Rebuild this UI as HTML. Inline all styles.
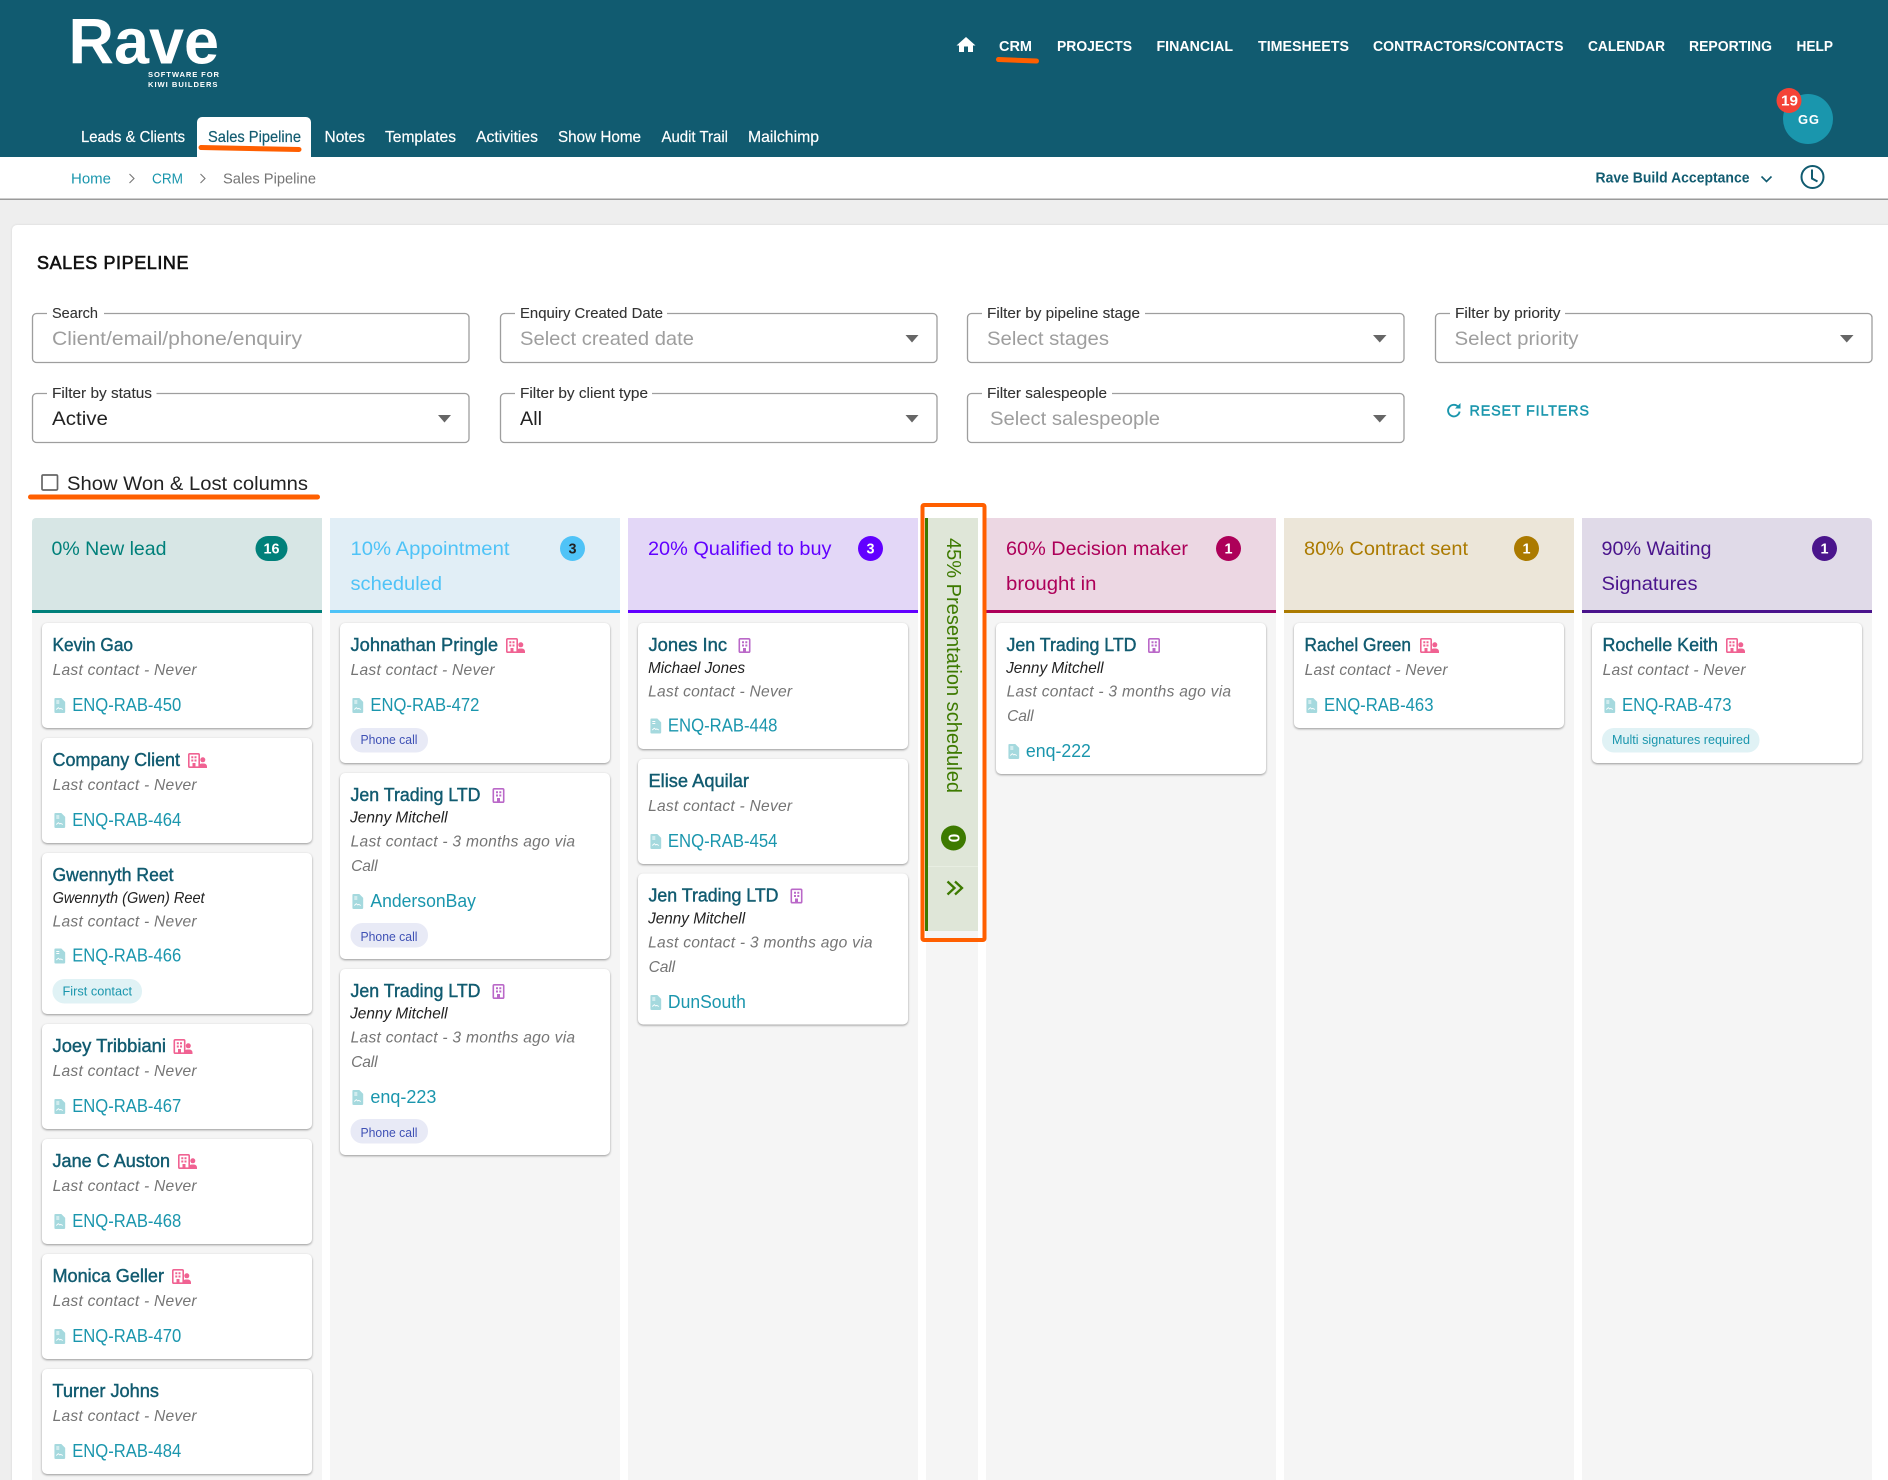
<!DOCTYPE html>
<html lang="en"><head><meta charset="utf-8"><title>Sales Pipeline</title>
<style>
html,body{margin:0;padding:0;background:#eee}
svg{display:block;font-family:"Liberation Sans",sans-serif}
.card{fill:#fff;filter:drop-shadow(0 1.2px 1px rgba(0,0,0,.38))}
.inp{fill:#fff;stroke:#9e9e9e;stroke-width:1.3;width:436.5px}
.nm{font-size:18px;fill:#115b70;stroke:#115b70;stroke-width:.42}
.lc{font-size:15.6px;fill:#757575;font-style:italic;transform:translateX(-.4px)}
.sb{font-size:15.6px;fill:#222;font-style:italic;transform:translateX(-.4px)}
.lk{font-size:18px;fill:#1a96ad;transform:translateX(-.6px)}
.lb{font-size:14.4px;fill:#333;stroke:#333;stroke-width:.1}
.ph{font-size:19.5px;fill:#9e9e9e}
.vl{font-size:19.5px;fill:#222}
.tn{font-size:14.5px;font-weight:bold;fill:#fff}
.sn{font-size:15.6px;fill:#fff;stroke:#fff;stroke-width:.18}
.hd{font-size:19.2px;transform:translateX(-.5px)}
.bd{font-size:14.4px;font-weight:bold;fill:#fff;text-anchor:middle}
.tg{font-size:13px}
</style></head><body>
<svg xmlns="http://www.w3.org/2000/svg" width="1888" height="1480" viewBox="0 0 1888 1480">
<defs>
<symbol id="d" viewBox="0 0 11 15" width="11" height="15"><path d="M1.2 0H7l4 4v9.800a1.200 1.200 0 0 1-1.200 1.200H1.200A1.200 1.200 0 0 1 0 13.800V1.200A1.200 1.200 0 0 1 1.200 0z" fill="#a5d9de"/><path d="M2 3h3M2 5h3M2 11.500l2-1.800 1.500 1.300 1-.6 2 1.100" fill="none" stroke="#fff" stroke-width=".9"/></symbol>
<symbol id="b" viewBox="0 0 12 15" width="12" height="15"><rect x=".8" y=".8" width="10.400" height="13.400" rx="1" fill="none" stroke="#ba68c8" stroke-width="1.600"/><path d="M3.500 3.200h2v2h-2zM6.800 3.200h2v2h-2zM3.500 6.500h2v2h-2zM6.800 6.500h2v2h-2zM4.500 10h3v4h-3z" fill="#ba68c8"/></symbol>
<symbol id="p" viewBox="0 0 19 15" width="19" height="15"><rect x=".8" y=".8" width="10.400" height="13.400" rx="1" fill="none" stroke="#f06292" stroke-width="1.600"/><path d="M3.300 3.200h2v2h-2zM6.500 3.200h2v2h-2zM3.300 6.500h2v2h-2zM6.500 6.500h2v2h-2zM4.500 10h3v4h-3z" fill="#f06292"/><circle cx="14.800" cy="6.800" r="2.500" fill="#f06292"/><path d="M10.500 15v-1.500a3 3 0 0 1 3-3h2.500a3 3 0 0 1 3 3V15z" fill="#f06292"/></symbol>
</defs>

<!-- page -->
<rect width="1888" height="1480" fill="#eee"/>
<rect x="12" y="225" width="1890" height="1270" rx="5" fill="#fff" style="filter:drop-shadow(0 0 1px rgba(0,0,0,.1))"/>

<!-- header -->
<rect width="1888" height="157" fill="#115b70"/>
<rect y="157" width="1888" height="42" fill="#fff"/>
<rect y="198.500" width="1888" height="1.500" fill="#9a9a9a"/>
<text x="68.500" y="63.500" font-size="64" font-weight="bold" fill="#fff" textLength="150.500" lengthAdjust="spacingAndGlyphs">Rave</text>
<text x="148" y="77" font-size="7.600" font-weight="bold" fill="#fff" textLength="71" lengthAdjust="spacing">SOFTWARE FOR</text>
<text x="148" y="87" font-size="7.600" font-weight="bold" fill="#fff" textLength="69.500" lengthAdjust="spacing">KIWI BUILDERS</text>

<path d="M966 37l-9.500 8.500H959V52h5v-5.500h4V52h5v-6.500h2.500z" fill="#fff"/>
<text class="tn" x="999" y="51" textLength="33" lengthAdjust="spacingAndGlyphs">CRM</text>
<text class="tn" x="1057" y="51" textLength="75" lengthAdjust="spacingAndGlyphs">PROJECTS</text>
<text class="tn" x="1156.500" y="51" textLength="76.500" lengthAdjust="spacingAndGlyphs">FINANCIAL</text>
<text class="tn" x="1258" y="51" textLength="91" lengthAdjust="spacingAndGlyphs">TIMESHEETS</text>
<text class="tn" x="1373" y="51" textLength="190.500" lengthAdjust="spacingAndGlyphs">CONTRACTORS/CONTACTS</text>
<text class="tn" x="1588" y="51" textLength="77" lengthAdjust="spacingAndGlyphs">CALENDAR</text>
<text class="tn" x="1689" y="51" textLength="83" lengthAdjust="spacingAndGlyphs">REPORTING</text>
<text class="tn" x="1796.500" y="51" textLength="36.500" lengthAdjust="spacingAndGlyphs">HELP</text>
<path d="M998.500 59.500L1036.500 61" stroke="#ff5f00" stroke-width="5" stroke-linecap="round"/>

<path d="M197 157V122a5 5 0 0 1 5-5h104a5 5 0 0 1 5 5v35z" fill="#fff"/>
<text class="sn" x="81" y="142" textLength="104" lengthAdjust="spacingAndGlyphs">Leads &amp; Clients</text>
<text class="sn" x="208" y="142" textLength="93" lengthAdjust="spacingAndGlyphs" style="fill:#115b70;stroke:#115b70">Sales Pipeline</text>
<text class="sn" x="324.500" y="142" textLength="40.500" lengthAdjust="spacingAndGlyphs">Notes</text>
<text class="sn" x="385" y="142" textLength="71" lengthAdjust="spacingAndGlyphs">Templates</text>
<text class="sn" x="476" y="142" textLength="62" lengthAdjust="spacingAndGlyphs">Activities</text>
<text class="sn" x="558" y="142" textLength="83" lengthAdjust="spacingAndGlyphs">Show Home</text>
<text class="sn" x="661.500" y="142" textLength="66.500" lengthAdjust="spacingAndGlyphs">Audit Trail</text>
<text class="sn" x="748" y="142" textLength="71" lengthAdjust="spacingAndGlyphs">Mailchimp</text>
<path d="M201 147.500L299 149.500" stroke="#ff5f00" stroke-width="5" stroke-linecap="round"/>

<circle cx="1808" cy="119" r="25" fill="#1a96ad"/>
<text x="1798" y="124" font-size="13" font-weight="bold" fill="#fff" textLength="21" lengthAdjust="spacing">GG</text>
<circle cx="1789" cy="100.500" r="12.500" fill="#f44336"/>
<text x="1781" y="105.500" font-size="14.400" font-weight="bold" fill="#fff" textLength="17" lengthAdjust="spacingAndGlyphs">19</text>

<text x="71" y="183.500" font-size="15px" fill="#1a96ad" textLength="40" lengthAdjust="spacingAndGlyphs">Home</text>
<path d="M129.500 174l4.500 4.500-4.500 4.500" fill="none" stroke="#777" stroke-width="1.100"/>
<text x="152" y="183.500" font-size="15px" fill="#1a96ad" textLength="31" lengthAdjust="spacingAndGlyphs">CRM</text>
<path d="M200.500 174l4.500 4.500-4.500 4.500" fill="none" stroke="#777" stroke-width="1.100"/>
<text x="223" y="183.500" font-size="15px" fill="#757575" textLength="93" lengthAdjust="spacingAndGlyphs">Sales Pipeline</text>
<text x="1595.500" y="182.500" font-size="14.500" font-weight="bold" fill="#115b70" textLength="154" lengthAdjust="spacingAndGlyphs">Rave Build Acceptance</text>
<path d="M1761.500 176.500l5 5 5-5" fill="none" stroke="#115b70" stroke-width="1.600"/>
<circle cx="1812.500" cy="177" r="11" fill="none" stroke="#115b70" stroke-width="2"/>
<path d="M1812 169.500V178.500l5.500 3" fill="none" stroke="#115b70" stroke-width="2"/>

<!-- title -->
<text x="37" y="269" font-size="18" fill="#111" stroke="#111" stroke-width=".6" textLength="151.500" lengthAdjust="spacing">SALES PIPELINE</text>

<!-- filters -->
<rect class="inp" x="32.500" y="313.500" width="436.500" height="49" rx="4"/>
<rect class="inp" x="500.500" y="313.500" width="436.500" height="49" rx="4"/>
<rect class="inp" x="967.500" y="313.500" width="436.500" height="49" rx="4"/>
<rect class="inp" x="1435.500" y="313.500" width="436.500" height="49" rx="4"/>
<rect class="inp" x="32.500" y="393.500" width="436.500" height="49" rx="4"/>
<rect class="inp" x="500.500" y="393.500" width="436.500" height="49" rx="4"/>
<rect class="inp" x="967.500" y="393.500" width="436.500" height="49" rx="4"/>
<g fill="#fff">
<rect x="47" y="311" width="57" height="5"/><rect x="515" y="311" width="152" height="5"/><rect x="982" y="311" width="163" height="5"/><rect x="1450" y="311" width="115" height="5"/>
<rect x="47" y="391" width="109.500" height="5"/><rect x="515" y="391" width="137" height="5"/><rect x="982" y="391" width="130" height="5"/>
</g>
<text class="lb" x="52" y="318" textLength="46" lengthAdjust="spacingAndGlyphs">Search</text>
<text class="lb" x="520" y="318" textLength="143" lengthAdjust="spacingAndGlyphs">Enquiry Created Date</text>
<text class="lb" x="987" y="318" textLength="153" lengthAdjust="spacingAndGlyphs">Filter by pipeline stage</text>
<text class="lb" x="1455" y="318" textLength="105.500" lengthAdjust="spacingAndGlyphs">Filter by priority</text>
<text class="lb" x="52" y="398" textLength="100" lengthAdjust="spacingAndGlyphs">Filter by status</text>
<text class="lb" x="520" y="398" textLength="128" lengthAdjust="spacingAndGlyphs">Filter by client type</text>
<text class="lb" x="987" y="398" textLength="120" lengthAdjust="spacingAndGlyphs">Filter salespeople</text>
<text class="ph" x="52" y="345" textLength="250" lengthAdjust="spacingAndGlyphs">Client/email/phone/enquiry</text>
<text class="ph" x="520" y="345" textLength="174" lengthAdjust="spacingAndGlyphs">Select created date</text>
<text class="ph" x="987" y="345" textLength="122" lengthAdjust="spacingAndGlyphs">Select stages</text>
<text class="ph" x="1454.500" y="345" textLength="124" lengthAdjust="spacingAndGlyphs">Select priority</text>
<text class="vl" x="52" y="425" textLength="56" lengthAdjust="spacingAndGlyphs">Active</text>
<text class="vl" x="520" y="425" textLength="22" lengthAdjust="spacingAndGlyphs">All</text>
<text class="ph" x="990" y="425" textLength="170" lengthAdjust="spacingAndGlyphs">Select salespeople</text>
<g fill="#666">
<path d="M905.500 335h13l-6.500 7.500z"/><path d="M1373 335h13.500l-6.750 7.500z"/><path d="M1840 335h13.500l-6.750 7.500z"/>
<path d="M438 415h13l-6.500 7.500z"/><path d="M905.500 415h13l-6.500 7.500z"/><path d="M1373 415h13.500l-6.750 7.500z"/>
</g>
<path d="M1458.300 406.800a5.800 5.800 0 1 0 1.300 4.800" fill="none" stroke="#1a96ad" stroke-width="1.900"/>
<path d="M1455 408.500h5.500V403z" fill="#1a96ad"/>
<text x="1469.500" y="415.500" font-size="14.400" fill="#1a96ad" stroke="#1a96ad" stroke-width=".45" textLength="119.500" lengthAdjust="spacing">RESET FILTERS</text>

<rect x="42" y="475" width="15.500" height="15" rx="1.200" fill="#fff" stroke="#666" stroke-width="1.700"/>
<text x="67" y="490" font-size="19.500" fill="#222" textLength="241" lengthAdjust="spacingAndGlyphs">Show Won &amp; Lost columns</text>
<rect x="28" y="494.500" width="292" height="5" rx="2.500" fill="#ff5f00"/>

<!-- column bodies -->
<g fill="#f5f5f5">
<rect x="32" y="610" width="290" height="870"/><rect x="330" y="610" width="290" height="870"/><rect x="628" y="610" width="290" height="870"/>
<rect x="926" y="930" width="52" height="550"/>
<rect x="986" y="610" width="290" height="870"/><rect x="1284" y="610" width="290" height="870"/><rect x="1582" y="610" width="290" height="870"/>
</g>
<!-- column heads -->
<path d="M32 610V522a4 4 0 0 1 4-4h286v92z" fill="#d7e6e5"/><rect x="32" y="610" width="290" height="3" fill="#00807a"/>
<rect x="330" y="518" width="290" height="92" fill="#e1eef6"/><rect x="330" y="610" width="290" height="3" fill="#4fc3f7"/>
<rect x="628" y="518" width="290" height="92" fill="#e3d7f7"/><rect x="628" y="610" width="290" height="3" fill="#6200ff"/>
<rect x="986" y="518" width="290" height="92" fill="#ecd7e3"/><rect x="986" y="610" width="290" height="3" fill="#ad0059"/>
<rect x="1284" y="518" width="290" height="92" fill="#ece6d9"/><rect x="1284" y="610" width="290" height="3" fill="#ab7a00"/>
<path d="M1582 518h286a4 4 0 0 1 4 4v88h-290z" fill="#e0dae8"/><rect x="1582" y="610" width="290" height="3" fill="#4a148c"/>

<text class="hd" x="52" y="555" fill="#00807a" textLength="115" lengthAdjust="spacingAndGlyphs">0% New lead</text>
<rect x="255.500" y="536" width="32" height="25" rx="12.500" fill="#00807a"/><text class="bd" x="271.500" y="553.500">16</text>
<text class="hd" x="351" y="555" fill="#4fc3f7" textLength="159" lengthAdjust="spacingAndGlyphs">10% Appointment</text>
<text class="hd" x="351" y="590" fill="#4fc3f7" textLength="91.500" lengthAdjust="spacingAndGlyphs">scheduled</text>
<circle cx="572.500" cy="548.500" r="12.500" fill="#4fc3f7"/><text class="bd" x="572.500" y="553.500" style="fill:#222">3</text>
<text class="hd" x="648.500" y="555" fill="#6200ff" textLength="183.500" lengthAdjust="spacingAndGlyphs">20% Qualified to buy</text>
<circle cx="870.500" cy="548.500" r="12.500" fill="#6200ff"/><text class="bd" x="870.500" y="553.500">3</text>
<text class="hd" x="1006.500" y="555" fill="#ad0059" textLength="182" lengthAdjust="spacingAndGlyphs">60% Decision maker</text>
<text class="hd" x="1006.500" y="590" fill="#ad0059" textLength="90.500" lengthAdjust="spacingAndGlyphs">brought in</text>
<circle cx="1228.500" cy="548.500" r="12.500" fill="#ad0059"/><text class="bd" x="1228.500" y="553.500">1</text>
<text class="hd" x="1304.500" y="555" fill="#ab7a00" textLength="164" lengthAdjust="spacingAndGlyphs">80% Contract sent</text>
<circle cx="1526.500" cy="548.500" r="12.500" fill="#ab7a00"/><text class="bd" x="1526.500" y="553.500">1</text>
<text class="hd" x="1602" y="555" fill="#4a148c" textLength="110" lengthAdjust="spacingAndGlyphs">90% Waiting</text>
<text class="hd" x="1602" y="590" fill="#4a148c" textLength="96" lengthAdjust="spacingAndGlyphs">Signatures</text>
<circle cx="1824.500" cy="548.500" r="12.500" fill="#4a148c"/><text class="bd" x="1824.500" y="553.500">1</text>

<!-- collapsed column -->
<rect x="925" y="518" width="53" height="413" fill="#dfe6d8"/>
<rect x="925" y="518" width="3" height="413" fill="#3d7a00"/>
<rect x="928" y="866" width="50" height="1" fill="#e8eee2"/>
<text transform="translate(947 538) rotate(90)" font-size="20" fill="#3d7a00" textLength="255" lengthAdjust="spacingAndGlyphs">45% Presentation scheduled</text>
<circle cx="953.500" cy="838" r="12.500" fill="#3d7a00"/>
<text transform="translate(948.500 838) rotate(90)" font-size="15.500" font-weight="bold" fill="#fff" text-anchor="middle">0</text>
<path d="M947.500 881.500l7 6.500-7 6.500M955 881.500l7 6.500-7 6.500" fill="none" stroke="#3d7a00" stroke-width="2.300"/>
<rect x="922.500" y="505" width="62" height="435" rx="1.500" fill="none" stroke="#ff5f00" stroke-width="4"/>

<!-- COLUMN 1 -->
<rect class="card" x="42" y="623" width="270" height="105" rx="5"/>
<text class="nm" x="52.500" y="651" textLength="80.500" lengthAdjust="spacingAndGlyphs">Kevin Gao</text>
<text class="lc" x="53" y="675" textLength="144" lengthAdjust="spacing">Last contact - Never</text>
<use href="#d" x="54.300" y="698"/><text class="lk" x="72.800" y="711" textLength="109" lengthAdjust="spacingAndGlyphs">ENQ-RAB-450</text>

<rect class="card" x="42" y="738" width="270" height="105" rx="5"/>
<text class="nm" x="52.500" y="766" textLength="127.500" lengthAdjust="spacingAndGlyphs">Company Client</text><use href="#p" x="188" y="753"/>
<text class="lc" x="53" y="790" textLength="144" lengthAdjust="spacing">Last contact - Never</text>
<use href="#d" x="54.300" y="813"/><text class="lk" x="72.800" y="826" textLength="109" lengthAdjust="spacingAndGlyphs">ENQ-RAB-464</text>

<rect class="card" x="42" y="853" width="270" height="161" rx="5"/>
<text class="nm" x="52.500" y="881" textLength="121" lengthAdjust="spacingAndGlyphs">Gwennyth Reet</text>
<text class="sb" x="53" y="903" textLength="152" lengthAdjust="spacingAndGlyphs">Gwennyth (Gwen) Reet</text>
<text class="lc" x="53" y="926.300" textLength="144" lengthAdjust="spacing">Last contact - Never</text>
<use href="#d" x="54.300" y="948.500"/><text class="lk" x="72.800" y="961.700" textLength="109" lengthAdjust="spacingAndGlyphs">ENQ-RAB-466</text>
<rect x="52.500" y="979" width="89.500" height="24.500" rx="12" fill="#e0f2f5"/><text class="tg" x="62.500" y="995.500" fill="#1a96ad" textLength="69.500" lengthAdjust="spacingAndGlyphs">First contact</text>

<rect class="card" x="42" y="1024" width="270" height="105" rx="5"/>
<text class="nm" x="52.500" y="1052" textLength="113.500" lengthAdjust="spacingAndGlyphs">Joey Tribbiani</text><use href="#p" x="173.500" y="1039"/>
<text class="lc" x="53" y="1076" textLength="144" lengthAdjust="spacing">Last contact - Never</text>
<use href="#d" x="54.300" y="1099"/><text class="lk" x="72.800" y="1112" textLength="109" lengthAdjust="spacingAndGlyphs">ENQ-RAB-467</text>

<rect class="card" x="42" y="1139" width="270" height="105" rx="5"/>
<text class="nm" x="52.500" y="1167" textLength="117.500" lengthAdjust="spacingAndGlyphs">Jane C Auston</text><use href="#p" x="178" y="1154"/>
<text class="lc" x="53" y="1191" textLength="144" lengthAdjust="spacing">Last contact - Never</text>
<use href="#d" x="54.300" y="1214"/><text class="lk" x="72.800" y="1227" textLength="109" lengthAdjust="spacingAndGlyphs">ENQ-RAB-468</text>

<rect class="card" x="42" y="1254" width="270" height="105" rx="5"/>
<text class="nm" x="52.500" y="1282" textLength="111.500" lengthAdjust="spacingAndGlyphs">Monica Geller</text><use href="#p" x="172" y="1269"/>
<text class="lc" x="53" y="1306" textLength="144" lengthAdjust="spacing">Last contact - Never</text>
<use href="#d" x="54.300" y="1329"/><text class="lk" x="72.800" y="1342" textLength="109" lengthAdjust="spacingAndGlyphs">ENQ-RAB-470</text>

<rect class="card" x="42" y="1369" width="270" height="105" rx="5"/>
<text class="nm" x="52.500" y="1397" textLength="106.500" lengthAdjust="spacingAndGlyphs">Turner Johns</text>
<text class="lc" x="53" y="1421" textLength="144" lengthAdjust="spacing">Last contact - Never</text>
<use href="#d" x="54.300" y="1444"/><text class="lk" x="72.800" y="1457" textLength="109" lengthAdjust="spacingAndGlyphs">ENQ-RAB-484</text>

<!-- COLUMN 2 -->
<rect class="card" x="340" y="623" width="270" height="140" rx="5"/>
<text class="nm" x="350.500" y="651" textLength="147.500" lengthAdjust="spacingAndGlyphs">Johnathan Pringle</text><use href="#p" x="506" y="638"/>
<text class="lc" x="351" y="675" textLength="144" lengthAdjust="spacing">Last contact - Never</text>
<use href="#d" x="352.300" y="698"/><text class="lk" x="371" y="711" textLength="109" lengthAdjust="spacingAndGlyphs">ENQ-RAB-472</text>
<rect x="350.500" y="728" width="77.500" height="24.500" rx="12" fill="#e8eaf6"/><text class="tg" x="360.500" y="744" fill="#3f51b5" textLength="57" lengthAdjust="spacingAndGlyphs">Phone call</text>

<rect class="card" x="340" y="773" width="270" height="186" rx="5"/>
<text class="nm" x="350.500" y="801" textLength="130" lengthAdjust="spacingAndGlyphs">Jen Trading LTD</text><use href="#b" x="492.500" y="788"/>
<text class="sb" x="350.500" y="822.500" textLength="97.500" lengthAdjust="spacingAndGlyphs">Jenny Mitchell</text>
<text class="lc" x="351" y="846.500" textLength="224.500" lengthAdjust="spacing">Last contact - 3 months ago via</text>
<text class="lc" x="351.500" y="871" textLength="26.500" lengthAdjust="spacing">Call</text>
<use href="#d" x="352.300" y="894"/><text class="lk" x="371" y="907" textLength="105.500" lengthAdjust="spacingAndGlyphs">AndersonBay</text>
<rect x="350.500" y="923" width="77.500" height="24.500" rx="12" fill="#e8eaf6"/><text class="tg" x="360.500" y="940.800" fill="#3f51b5" textLength="57" lengthAdjust="spacingAndGlyphs">Phone call</text>

<rect class="card" x="340" y="969" width="270" height="186" rx="5"/>
<text class="nm" x="350.500" y="997" textLength="130" lengthAdjust="spacingAndGlyphs">Jen Trading LTD</text><use href="#b" x="492.500" y="984"/>
<text class="sb" x="350.500" y="1018.500" textLength="97.500" lengthAdjust="spacingAndGlyphs">Jenny Mitchell</text>
<text class="lc" x="351" y="1042.500" textLength="224.500" lengthAdjust="spacing">Last contact - 3 months ago via</text>
<text class="lc" x="351.500" y="1067" textLength="26.500" lengthAdjust="spacing">Call</text>
<use href="#d" x="352.300" y="1090"/><text class="lk" x="371" y="1103" textLength="66" lengthAdjust="spacingAndGlyphs">enq-223</text>
<rect x="350.500" y="1119" width="77.500" height="24.500" rx="12" fill="#e8eaf6"/><text class="tg" x="360.500" y="1136.800" fill="#3f51b5" textLength="57" lengthAdjust="spacingAndGlyphs">Phone call</text>

<!-- COLUMN 3 -->
<rect class="card" x="638" y="623" width="270" height="126" rx="5"/>
<text class="nm" x="648.500" y="651" textLength="78.500" lengthAdjust="spacingAndGlyphs">Jones Inc</text><use href="#b" x="738.500" y="638"/>
<text class="sb" x="648.500" y="673" textLength="97" lengthAdjust="spacingAndGlyphs">Michael Jones</text>
<text class="lc" x="648.500" y="696.300" textLength="144" lengthAdjust="spacing">Last contact - Never</text>
<use href="#d" x="650.300" y="718.500"/><text class="lk" x="668.500" y="731.700" textLength="109.500" lengthAdjust="spacingAndGlyphs">ENQ-RAB-448</text>

<rect class="card" x="638" y="759" width="270" height="105" rx="5"/>
<text class="nm" x="648.500" y="787" textLength="100.500" lengthAdjust="spacingAndGlyphs">Elise Aquilar</text>
<text class="lc" x="648.500" y="811" textLength="144" lengthAdjust="spacing">Last contact - Never</text>
<use href="#d" x="650.300" y="834"/><text class="lk" x="668.500" y="847" textLength="109.500" lengthAdjust="spacingAndGlyphs">ENQ-RAB-454</text>

<rect class="card" x="638" y="873.500" width="270" height="151" rx="5"/>
<text class="nm" x="648.500" y="901.500" textLength="130" lengthAdjust="spacingAndGlyphs">Jen Trading LTD</text><use href="#b" x="790.500" y="888.500"/>
<text class="sb" x="648.500" y="923.500" textLength="97" lengthAdjust="spacingAndGlyphs">Jenny Mitchell</text>
<text class="lc" x="648.500" y="947.500" textLength="224.500" lengthAdjust="spacing">Last contact - 3 months ago via</text>
<text class="lc" x="649" y="972" textLength="26.500" lengthAdjust="spacing">Call</text>
<use href="#d" x="650.300" y="995"/><text class="lk" x="668.500" y="1008" textLength="78" lengthAdjust="spacingAndGlyphs">DunSouth</text>

<!-- COLUMN 4 -->
<rect class="card" x="996" y="623" width="270" height="151" rx="5"/>
<text class="nm" x="1006.500" y="651" textLength="130" lengthAdjust="spacingAndGlyphs">Jen Trading LTD</text><use href="#b" x="1148" y="638"/>
<text class="sb" x="1006.500" y="673" textLength="97.500" lengthAdjust="spacingAndGlyphs">Jenny Mitchell</text>
<text class="lc" x="1007" y="696.500" textLength="224.500" lengthAdjust="spacing">Last contact - 3 months ago via</text>
<text class="lc" x="1007.500" y="721" textLength="26.500" lengthAdjust="spacing">Call</text>
<use href="#d" x="1008.300" y="744"/><text class="lk" x="1026.500" y="757" textLength="65" lengthAdjust="spacingAndGlyphs">enq-222</text>

<!-- COLUMN 5 -->
<rect class="card" x="1294" y="623" width="270" height="105" rx="5"/>
<text class="nm" x="1304.500" y="651" textLength="106.500" lengthAdjust="spacingAndGlyphs">Rachel Green</text><use href="#p" x="1420" y="638"/>
<text class="lc" x="1305" y="675" textLength="143" lengthAdjust="spacing">Last contact - Never</text>
<use href="#d" x="1306.300" y="698"/><text class="lk" x="1324.600" y="711" textLength="109.500" lengthAdjust="spacingAndGlyphs">ENQ-RAB-463</text>

<!-- COLUMN 6 -->
<rect class="card" x="1592" y="623" width="270" height="140" rx="5"/>
<text class="nm" x="1602.500" y="651" textLength="115.500" lengthAdjust="spacingAndGlyphs">Rochelle Keith</text><use href="#p" x="1726" y="638"/>
<text class="lc" x="1603" y="675" textLength="143" lengthAdjust="spacing">Last contact - Never</text>
<use href="#d" x="1604.300" y="698"/><text class="lk" x="1622.600" y="711" textLength="109.500" lengthAdjust="spacingAndGlyphs">ENQ-RAB-473</text>
<rect x="1602" y="728" width="157.500" height="24.500" rx="12" fill="#e0f2f5"/><text class="tg" x="1612" y="744" fill="#1a96ad" textLength="138" lengthAdjust="spacingAndGlyphs">Multi signatures required</text>
</svg>
</body></html>
